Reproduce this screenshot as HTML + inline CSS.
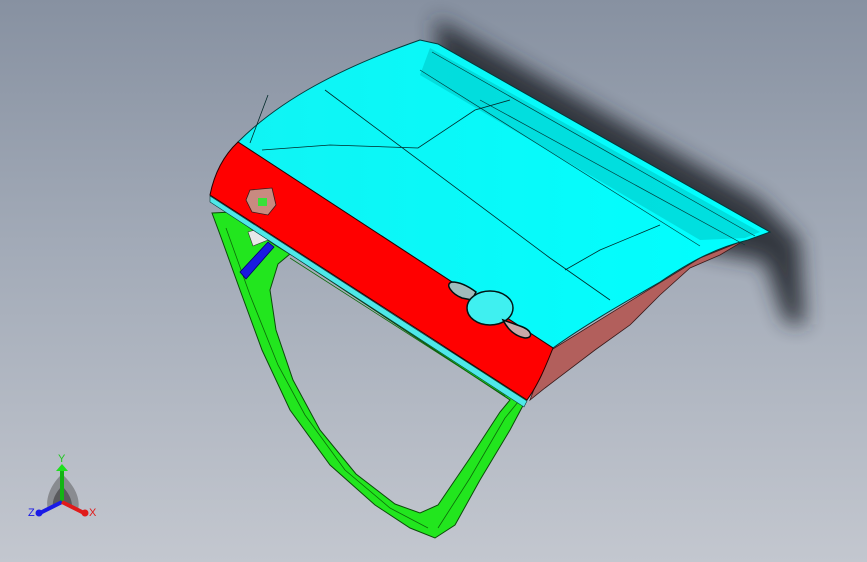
<!DOCTYPE html>
<html><head><meta charset="utf-8"><style>
html,body{margin:0;padding:0}
body{width:867px;height:562px;overflow:hidden;background:linear-gradient(180deg,#8791a1 0%,#a3abb8 45%,#c3c7cf 100%);font-family:"Liberation Sans",sans-serif}
svg{position:absolute;left:0;top:0}
</style></head><body>
<svg width="867" height="562" viewBox="0 0 867 562">
<defs>
<filter id="bl" x="-20%" y="-20%" width="140%" height="140%"><feGaussianBlur stdDeviation="10"/></filter>
<linearGradient id="cy" x1="0" y1="0" x2="1" y2="0"><stop offset="0" stop-color="#10f4f4"/><stop offset="1" stop-color="#00ffff"/></linearGradient>
</defs>
<!-- shadow -->
<path d="M435,18 L760,200 L800,240 L805,325 L785,322 L765,262 L700,250 L620,200 L440,75 Z" fill="#262b33" opacity="0.9" filter="url(#bl)"/>
<!-- pink underside -->
<path d="M548,352 L700,258 L745,240 L720,255 L690,268 L660,295 L630,325 L595,350 L545,388 L530,400 Z" fill="#b25f5c" stroke="#3a1a1a" stroke-width="0.8"/>
<!-- green frame -->
<path fill="#22e61e" stroke="#0c4a0a" stroke-width="1"
 d="M212,213 L232,212 L250,228 L275,245 L527,398 L510,430 L480,480 L455,525 L435,538 L410,528 L375,505 L330,465 L290,410 L262,350 L240,290 L222,240 Z
 M510,400 L290,254 L278,264 L270,290 L276,330 L293,380 L320,430 L356,474 L395,504 L420,513 L438,505 L470,458 L500,412 Z" fill-rule="evenodd"/>
<path d="M226,228 L250,295 L278,365 L305,415 L345,470 L390,508 L428,528 M438,528 L470,478 L505,418 L518,402" fill="none" stroke="#0d6a0a" stroke-width="0.8"/>
<path d="M290,258 L505,396" fill="none" stroke="#0d6a0a" stroke-width="0.8"/>
<!-- blue part -->
<path d="M240,272 L268,242 L274,247 L246,279 Z" fill="#1a1ae0" stroke="#000066" stroke-width="0.8"/>
<path d="M248,232 L262,228 L268,240 L253,246 Z" fill="#e8e8e8" stroke="#333" stroke-width="0.6"/>
<!-- cyan top panel -->
<path d="M238,142 C280,100 340,68 420,40 L438,44 L770,232 L748,240 C715,248 690,262 660,282 C620,305 585,325 553,348 Z" fill="url(#cy)" stroke="#003c3c" stroke-width="1"/>
<path d="M430,48 L760,232 L745,238 L700,240 L420,75 Z" fill="#00d2d2" opacity="0.7"/>
<path d="M438,44 L770,232 M432,52 L755,236 M420,70 L700,246 M480,100 L745,245" fill="none" stroke="#003c3c" stroke-width="0.7"/>
<path d="M325,90 L550,258 L610,300 M262,150 L330,145 L418,148 L475,110 L510,100 M565,270 L600,250 L660,225 M250,143 L268,95" fill="none" stroke="#002a2a" stroke-width="0.8"/>
<!-- red band -->
<path d="M238,142 L553,348 C545,368 538,385 527,400 L210,195 C214,175 222,157 238,142 Z" fill="#ff0000" stroke="#2a0000" stroke-width="1"/>
<path d="M210,196 L527,401 L524,407 L210,202 Z" fill="#4fe8e8" stroke="#083a3a" stroke-width="0.6"/>
<!-- handle -->
<path d="M452,282 C444,284 452,294 462,298 L472,300 L476,292 C468,286 460,282 452,282 Z" fill="#9fbcbc" stroke="#001010" stroke-width="1.5"/>
<ellipse cx="490" cy="308" rx="23" ry="17" fill="#3ff0f0" stroke="#001515" stroke-width="1.5"/>
<path d="M503,320 L520,326 C532,330 534,338 525,338 C515,336 508,330 503,320 Z" fill="#c8a8a8" stroke="#001010" stroke-width="1.5"/>
<!-- lock bracket -->
<path d="M250,190 L272,188 L276,205 L268,215 L252,212 L246,200 Z" fill="#c98a80" stroke="#3a1a1a" stroke-width="0.8"/>
<rect x="258" y="198" width="9" height="8" fill="#39e039"/>
</svg>
<svg width="867" height="562" viewBox="0 0 867 562">
<path d="M62,474 C50,485 45,500 48,510 L62,502 L78,510 C81,498 74,485 62,474 Z" fill="#555" opacity="0.5"/>
<path d="M62,486 C55,493 52,501 53,506 L62,502 L72,506 C72,499 68,492 62,486 Z" fill="#333" opacity="0.55"/>
<rect x="60" y="470" width="4" height="32" fill="#13b413"/>
<path d="M56,471 L68,471 L62,464 Z" fill="#1ee01e"/>
<path d="M62,502 L40,513" stroke="#1a1ae6" stroke-width="4"/>
<path d="M62,502 L84,513" stroke="#e01a1a" stroke-width="4"/>
<circle cx="39" cy="513" r="3.5" fill="#1a1ae6"/>
<circle cx="85" cy="513" r="3.5" fill="#e01a1a"/>
<text x="58" y="462" font-size="11" fill="#1ec81e" font-family="Liberation Sans">Y</text>
<text x="28" y="516" font-size="11" fill="#1a1ae6" font-family="Liberation Sans">Z</text>
<text x="89" y="516" font-size="11" fill="#e01a1a" font-family="Liberation Sans">X</text>
</svg>
</body></html>
